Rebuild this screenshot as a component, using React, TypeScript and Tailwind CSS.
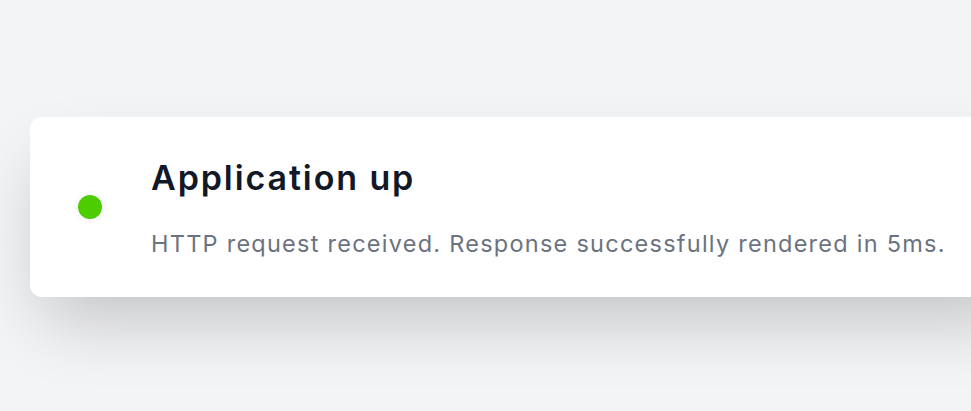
import React from 'react';

export default function App() {
  return <div className="h-[411px] w-full overflow-hidden bg-[#f3f4f6] pt-[117px] pl-[30px]" style={{ fontFamily: 'Inter, "Noto Sans", sans-serif' }}>
      <div className="flex w-[1000px] h-[180px] items-center rounded-xl bg-white pl-[48px] shadow-[0_35px_70px_-12px_rgba(0,0,0,0.2)]">
        <span className="h-6 w-6 shrink-0 rounded-full bg-[#4ccd00] ring-4 ring-[#fafafa]" />
        <div className="ml-[49px] flex flex-col">
          <h2 className="mt-[3px] text-[34px] leading-[40px] font-semibold tracking-[1.9px] text-[#111827]">
            Application up
          </h2>
          <p className="mt-[30px] text-[23.5px] leading-[32px] tracking-[1.25px] text-[#6b7280]">
            HTTP request received. Response successfully rendered in 5ms.
          </p>
        </div>
      </div>
    </div>;
}
